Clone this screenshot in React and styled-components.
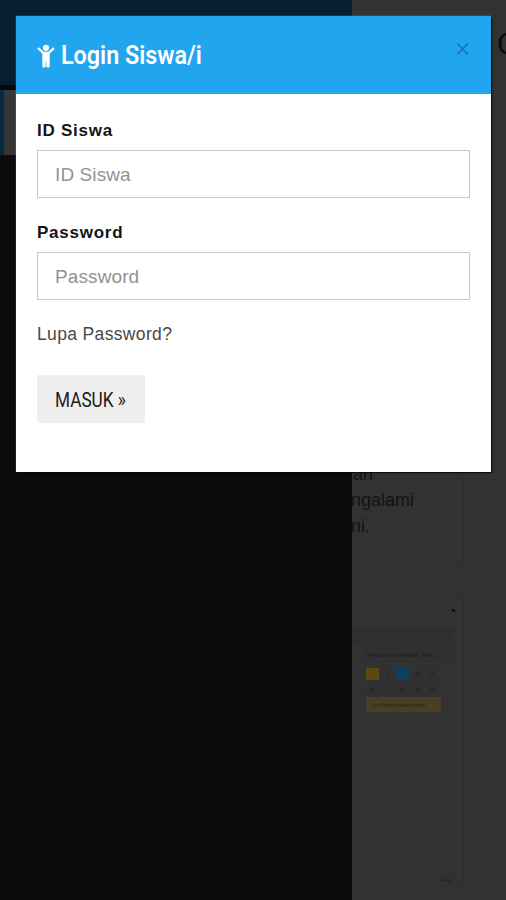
import React from 'react'
import styled, { createGlobalStyle } from 'styled-components'

const GlobalStyle = createGlobalStyle`
  * {
    box-sizing: border-box;
  }

  body {
    margin: 0;
    background: #323232;
    font-family: "Liberation Sans", Arial, sans-serif;
  }
`

const Page = styled.div`
  position: relative;
  display: flex;
  width: 506px;
  height: 900px;
  overflow: hidden;
  background: #323232;
`

const Sidebar = styled.div`
  flex: none;
  width: 352px;
  background: #0b0b0d;
`

const Brand = styled.div`
  height: 90px;
  background: #061e2f;
  border-bottom: 5px solid #07090b;
`

const ActiveItem = styled.div`
  height: 65px;
  background: #363636;
  border-left: 4px solid #06293e;
`

const Content = styled.div`
  flex: none;
  display: flex;
  flex-direction: column;
  width: 154px;
  overflow: hidden;
`

const PageTitle = styled.div`
  flex: none;
  height: 84px;
  padding: 29px 0 0 145px;
  font: 29px/30px Roboto, sans-serif;
  color: #0b0b0b;
  white-space: nowrap;
`

const Card = styled.div`
  flex: none;
  width: 112px;
  height: ${props => props.height}px;
  margin-bottom: 32px;
  border: 1px solid #2d2d2d;
  border-left: none;
`

const Story = styled.div`
  display: flex;
  flex-direction: column;
  align-items: flex-start;
  padding-top: 376px;
  font-size: 18px;
  line-height: 26px;
  color: #131313;
`

const Line = styled.div`
  margin-left: ${props => props.shift}px;
`

const Thumb = styled(Card)`
  display: flex;
  flex-direction: column;
  font-size: 5px;
  color: #1d1d1d;
`

const Dot = styled.div`
  align-self: flex-end;
  width: 3px;
  height: 3px;
  margin: 10px 8px 15px 0;
  background: #121212;
`

const Bar = styled.div`
  height: 15px;
  margin-right: 9px;
  background: #2f2f2f;
`

const Sheet = styled.div`
  width: 92px;
  height: 230px;
  margin: 5px 0 0 12px;
  border: 1px solid #303030;
`

const SheetTitle = styled.div`
  height: 14px;
  padding: 3px 0 0 2px;
  font-size: 6px;
  letter-spacing: -0.5px;
  line-height: 8px;
  white-space: nowrap;
  background: #303030;
`

const Numbers = styled.div`
  display: grid;
  grid-template-columns: repeat(5, 13px);
  gap: 4px 2px;
  padding: 6px 0 0 1px;
`

const Num = styled.span`
  height: 12px;
  line-height: 12px;
  text-align: center;
  background: ${props => props.color || '#303030'};
`

const Notice = styled.div`
  width: 75px;
  height: 15px;
  margin: 1px 0 0 1px;
  padding-left: 6px;
  line-height: 16px;
  letter-spacing: -0.2px;
  white-space: nowrap;
  color: #28230f;
  background: #494023;
`

const Small = styled.div`
  align-self: flex-end;
  margin-right: 11px;
  line-height: 6px;
`

const Overlay = styled.div`
  position: absolute;
  inset: 0;
  padding: 16px 15px 0 16px;
`

const Modal = styled.div`
  height: 456px;
  background: #fff;
  box-shadow: 1px 1px 1px rgba(0, 0, 0, 0.8), 0 0 1px #999;
`

const ModalHeader = styled.div`
  display: flex;
  justify-content: space-between;
  height: 78px;
  padding: 23px 22px 0 21px;
  background: #22a5ef;
`

const ModalTitle = styled.h4`
  display: flex;
  align-items: flex-start;
  margin: 0;
  color: #fff;

  svg {
    margin: 5px 6px 0 0;
  }
`

const Condensed = styled.span`
  display: inline-block;
  font-family: Roboto, sans-serif;
  font-size: ${props => props.size}px;
  font-weight: ${props => props.weight || 400};
  line-height: 32px;
  white-space: nowrap;
  transform: scaleX(${props => props.scale});
  transform-origin: left;
`

const Close = styled.button`
  width: 13px;
  height: 20px;
  padding: 0;
  border: none;
  background: none;

  svg {
    display: block;
  }
`

const Form = styled.form`
  padding: 25px 22px 0 21px;
`

const Label = styled.label`
  display: block;
  height: 31px;
  padding-top: 1px;
  font-size: 17px;
  font-weight: bold;
  line-height: 22px;
  letter-spacing: 0.75px;
  color: #151515;
`

const Input = styled.input`
  display: block;
  width: 433px;
  height: 48px;
  margin-bottom: 23px;
  padding: 1px 17px 0;
  border: 1px solid #c9c9c9;
  border-radius: 0;
  font-family: inherit;
  font-size: 19px;
  letter-spacing: 0.1px;
  background: #fff;

  &::placeholder {
    color: #929292;
    opacity: 1;
  }
`

const Forgot = styled.a`
  display: block;
  height: 52px;
  font-size: 17.5px;
  line-height: 22px;
  letter-spacing: 0.35px;
  color: #484848;
`

const Submit = styled.button`
  display: block;
  width: 108px;
  height: 48px;
  padding: 1px 0 0 18px;
  border: none;
  text-align: left;
  color: #1b1b1b;
  background: #efefef;
`

const ChildIcon = () => (
  <svg width="18" height="25" viewBox="0 0 18 25" fill="#fff">
    <circle cx="9" cy="3.8" r="3.1" />
    <path d="M1.7 4.6L6.4 9H11.6L16.3 4.6" fill="none" stroke="#fff" strokeWidth="2.3" strokeLinecap="round" strokeLinejoin="round" />
    <path d="M5.3 8H12.7V22.4Q12.7 23.4 11 23.4Q9.3 23.4 9.3 22.4V18H8.7V22.4Q8.7 23.4 7 23.4Q5.3 23.4 5.3 22.4Z" />
  </svg>
)

const CloseIcon = () => (
  <svg width="13" height="20" viewBox="0 0 13 20" fill="none" stroke="#1b75a8" strokeWidth="1.7">
    <path d="M1.2 4.5L12 15.5M12 4.5L1.2 15.5" />
  </svg>
)

const Preview = () => (
  <Thumb height={288}>
    <Dot />
    <Bar />
    <Sheet>
      <SheetTitle>Pengumuman Sekolah, Terbit...</SheetTitle>
      <Numbers>
        <Num color="#5b4710" />
        <Num>2</Num>
        <Num color="#0f3f5b" />
        <Num>4</Num>
        <Num>5</Num>
        <Num>6</Num>
        <Num />
        <Num>8</Num>
        <Num>9</Num>
        <Num>10</Num>
      </Numbers>
      <Notice>No. Pengumuman terbaru</Notice>
    </Sheet>
    <Small>Tutup</Small>
  </Thumb>
)

const LoginModal = () => (
  <Modal>
    <ModalHeader>
      <ModalTitle>
        <ChildIcon />
        <Condensed size={26} weight={600} scale={0.897}>Login Siswa/i</Condensed>
      </ModalTitle>
      <Close type="button" aria-label="Close"><CloseIcon /></Close>
    </ModalHeader>
    <Form>
      <Label htmlFor="id">ID Siswa</Label>
      <Input id="id" placeholder="ID Siswa" />
      <Label htmlFor="password">Password</Label>
      <Input id="password" type="password" placeholder="Password" />
      <Forgot>Lupa Password?</Forgot>
      <Submit type="button"><Condensed size={20} scale={0.86}>MASUK »</Condensed></Submit>
    </Form>
  </Modal>
)

const App = () => (
  <Page>
    <GlobalStyle />
    <Sidebar>
      <Brand />
      <ActiveItem />
    </Sidebar>
    <Content>
      <PageTitle>O</PageTitle>
      <Card height={482}>
        <Story>
          <Line shift={1}>an</Line>
          <Line shift={-1}>ngalami</Line>
          <Line shift={-1}>ni.</Line>
        </Story>
      </Card>
      <Preview />
    </Content>
    <Overlay>
      <LoginModal />
    </Overlay>
  </Page>
)

export default App
